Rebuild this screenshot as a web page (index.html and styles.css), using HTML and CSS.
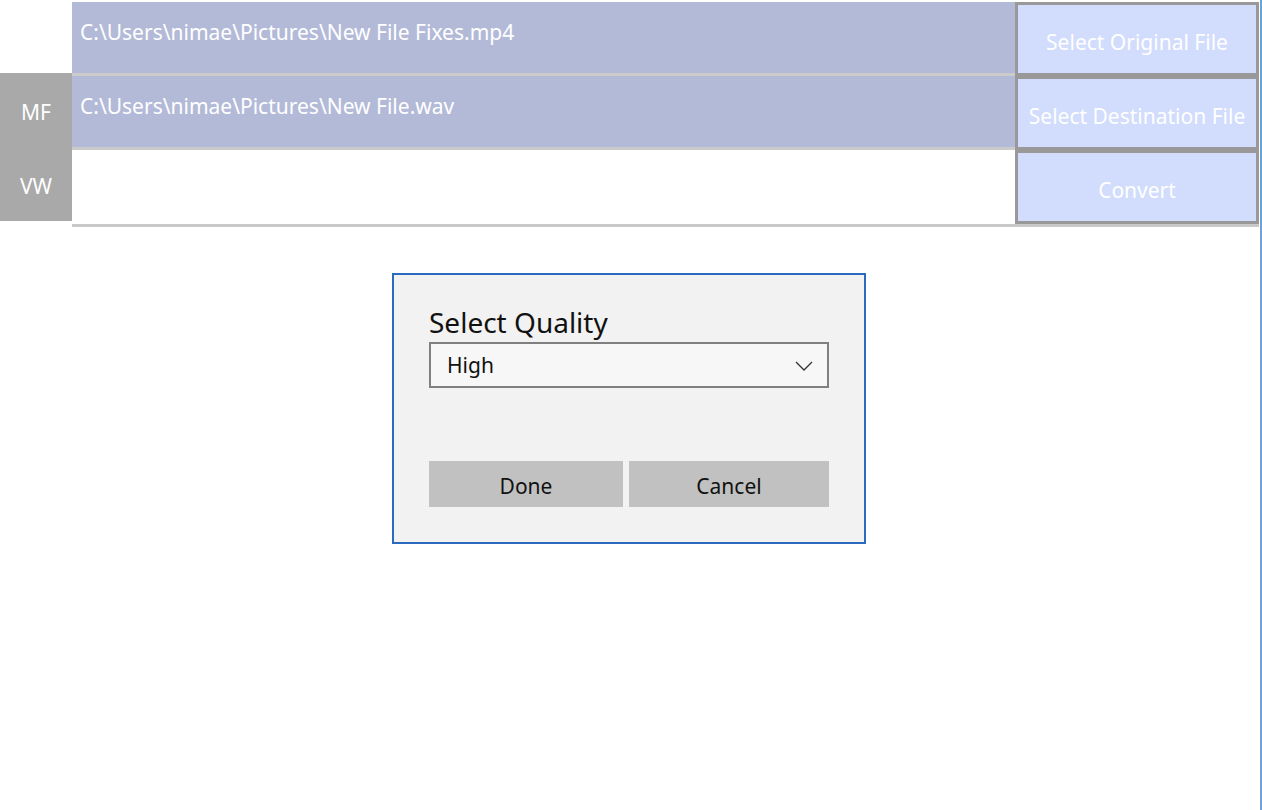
FILE: index.html
```html
<!DOCTYPE html>
<html lang="en">
<head>
    <meta charset="UTF-8">
    <title>Media Converter</title>
    <link rel="stylesheet" href="styles.css">
</head>
<body>
    <div class="app">
        <div class="main">
            <div class="top">
                <div class="side">
                    <div class="tab">MF</div>
                    <div class="tab">VW</div>
                </div>
                <div class="fields">
                    <div class="field filled">C:\Users\nimae\Pictures\New File Fixes.mp4</div>
                    <div class="field filled">C:\Users\nimae\Pictures\New File.wav</div>
                    <div class="field"></div>
                </div>
                <div class="actions">
                    <div class="action">Select Original File</div>
                    <div class="action">Select Destination File</div>
                    <div class="action">Convert</div>
                </div>
            </div>
            <div class="rule"></div>

            <!-- quality picker dialog -->
            <div class="dialog">
                <div class="dialog-title">Select Quality</div>
                <div class="combo">
                    <span>High</span>
                    <svg class="chevron" width="18" height="10" viewBox="0 0 18 10">
                        <polyline points="1,1 9,9 17,1" fill="none" stroke="#333" stroke-width="1.3"/>
                    </svg>
                </div>
                <div class="dialog-buttons">
                    <div class="dlg-btn">Done</div>
                    <div class="dlg-btn">Cancel</div>
                </div>
            </div>
        </div>
    </div>
</body>
</html>
```

FILE: styles.css
```css
/* styles.css */

body {
    margin: 0;
    background-color: #fff;
    font-family: 'Noto Sans', 'Open Sans', sans-serif;
}

.app {
    display: flex;
    height: 810px;
    border-right: 2px solid #6aa3d6;
    box-sizing: border-box;
}

.main {
    flex: 1;
}

.top {
    display: flex;
    padding-top: 2px;
}

.side {
    width: 72px;
    padding-top: 71px;
}

.tab {
    height: 74px;
    background-color: #a9a9a9;
    color: #fff;
    font-size: 21px;
    display: flex;
    justify-content: center;
    align-items: center;
    padding-top: 4px;
    box-sizing: border-box;
}

.fields {
    flex: 1;
    display: flex;
    flex-direction: column;
}

.field {
    height: 71px;
    border-bottom: 3px solid #cbcbcb;
    color: #fff;
    font-size: 21px;
    padding: 17px 8px 0;
    line-height: 26px;
}

.field.filled {
    height: 54px;
    background-color: #b3bad8;
}

.field:last-child {
    border-bottom: none;
    height: 55px;
}

.actions {
    width: 244px;
    margin-right: 1px;
    display: flex;
    flex-direction: column;
}

.action {
    height: 74px;
    box-sizing: border-box;
    border: 3px solid #999;
    background-color: #d2dcfc;
    color: #fff;
    font-size: 21px;
    display: flex;
    justify-content: center;
    align-items: center;
    padding-top: 5px;
}

.rule {
    height: 3px;
    margin: 0 1px 0 72px;
    background-color: #c9c9c9;
}

.dialog {
    width: 474px;
    margin: 46px 0 0 392px;
    box-sizing: border-box;
    border: 2px solid #2a6bc0;
    background-color: #f2f2f2;
    padding: 28px 35px 35px;
}

.dialog-title {
    font-size: 28px;
    line-height: 39px;
    color: #111;
}

.combo {
    height: 46px;
    box-sizing: border-box;
    border: 2px solid #808080;
    background-color: #f7f7f7;
    display: flex;
    align-items: center;
    justify-content: space-between;
    padding: 0 14px 0 16px;
    font-size: 21px;
    color: #111;
}

.chevron {
    margin-top: 1px;
}

.dialog-buttons {
    margin-top: 73px;
    display: grid;
    grid-template-columns: 194px 1fr;
    gap: 6px;
}

.dlg-btn {
    height: 46px;
    background-color: #c1c1c1;
    color: #111;
    font-size: 21px;
    display: flex;
    justify-content: center;
    align-items: center;
    padding-top: 4px;
    box-sizing: border-box;
}
```
